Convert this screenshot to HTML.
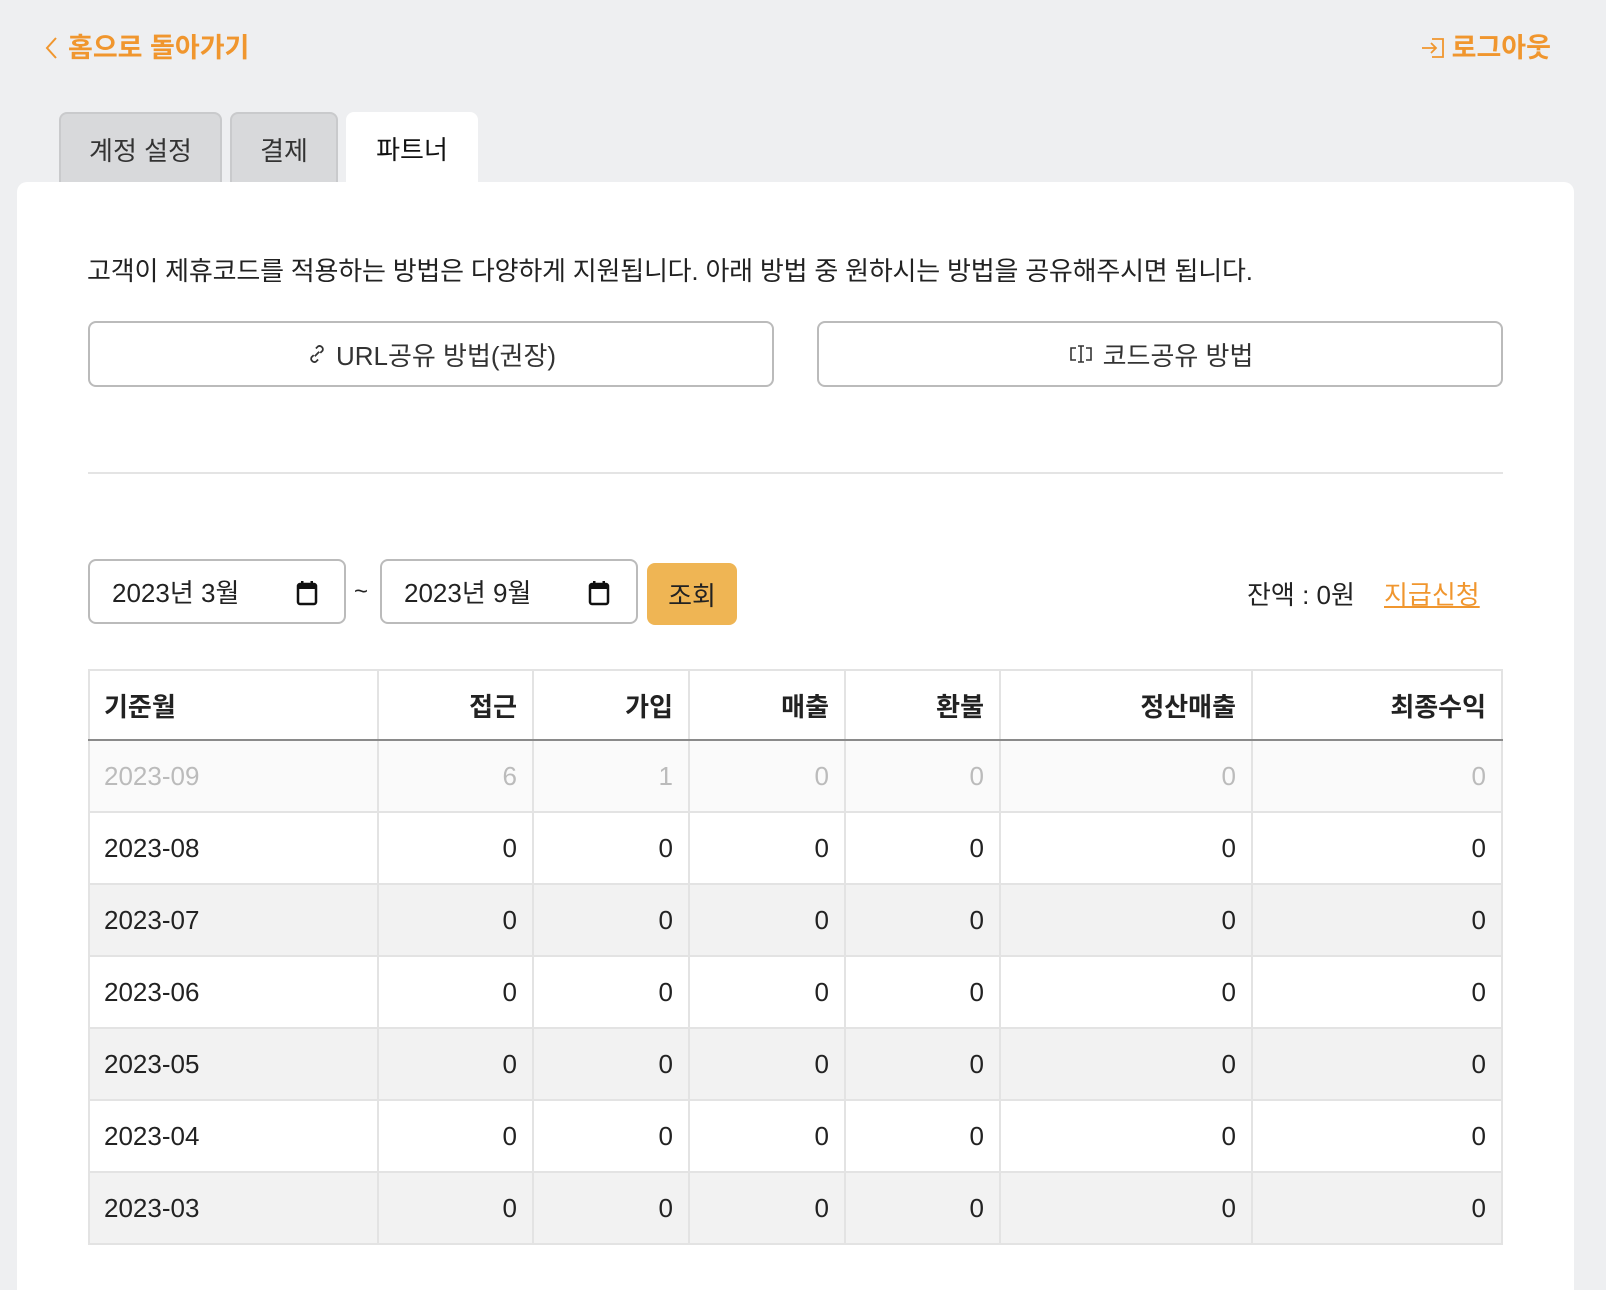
<!DOCTYPE html>
<html><head><meta charset="utf-8"><style>
*{box-sizing:border-box;margin:0;padding:0}
html,body{width:1606px;height:1290px;overflow:hidden}
body{background:#eeeff1;font-family:"Liberation Sans","Noto Sans CJK KR",sans-serif;color:#222;position:relative}
.abs{position:absolute}
.back{left:44px;top:31px;font-size:27px;font-weight:700;color:#f0962e;line-height:34px;display:flex;align-items:center;gap:10px}
.logout{right:55px;top:31px;font-size:27px;font-weight:700;color:#f0962e;line-height:34px;display:flex;align-items:center;gap:6px}
.tab{top:112px;height:72px;border-radius:8px 8px 0 0;font-size:26px;display:flex;align-items:center;justify-content:center;color:#333}
.tab.off{background:#d8d9db;border:2px solid #c9cacc;border-bottom:none}
.tab.on{background:#fff;color:#111}
.card{left:17px;top:182px;width:1557px;height:1150px;background:#fff;border-radius:10px}
.desc{left:87px;top:255px;font-size:26px;color:#222;line-height:32px;letter-spacing:-0.2px}
.btn{top:321px;height:66px;width:686px;border:2px solid #bbb;border-radius:8px;display:flex;align-items:center;justify-content:center;font-size:26px;color:#333;gap:8px}
.hr{left:88px;top:472px;width:1415px;height:2px;background:#e4e4e4}
.date{top:559px;height:65px;width:258px;border:2px solid #bbb;border-radius:8px;font-size:26px;display:flex;align-items:center;padding-left:22px;color:#222}
.date svg{position:absolute;right:26px;top:19px}
.search{left:647px;top:563px;width:90px;height:62px;background:#efb554;border-radius:8px;font-size:26px;display:flex;align-items:center;justify-content:center;color:#222}
table{position:absolute;left:88px;top:669px;width:1415px;border-collapse:collapse;font-size:26px}
td,th{border:2px solid #e3e3e3;height:72px;padding:0 15px 0 14px;text-align:right}
th{font-weight:700;height:70px;border-bottom:2px solid #8a8a8a}
td:first-child,th:first-child{text-align:left}
tr.g td{background:#f2f2f2}
tr.f td{background:#fafafa;color:#bbb}
</style></head><body>
<div class="abs back"><svg width="14" height="24" viewBox="0 0 14 24" fill="none" stroke="#f0962e" stroke-width="2"><path d="M12 2L3 12l9 10"/></svg>홈으로 돌아가기</div>
<div class="abs logout"><svg width="26" height="24" viewBox="0 0 26 24" fill="none" stroke="#f0962e" stroke-width="1.8"><path d="M12 3h11v18H12M2 12h14M11 7l5 5-5 5"/></svg>로그아웃</div>
<div class="abs tab off" style="left:59px;width:163px">계정 설정</div>
<div class="abs tab off" style="left:230px;width:108px">결제</div>
<div class="abs tab on" style="left:346px;width:132px">파트너</div>
<div class="abs card"></div>
<div class="abs desc">고객이 제휴코드를 적용하는 방법은 다양하게 지원됩니다. 아래 방법 중 원하시는 방법을 공유해주시면 됩니다.</div>
<div class="abs btn" style="left:88px"><svg width="22" height="22" viewBox="0 0 20 20" fill="none" stroke="#333" stroke-width="1.6"><path d="M8 12l4-4M9 5l2-2a3 3 0 014 4l-2 2M11 15l-2 2a3 3 0 01-4-4l2-2"/></svg>URL공유 방법(권장)</div>
<div class="abs btn" style="left:817px"><svg width="28" height="24" viewBox="0 0 28 22" fill="none" stroke="#333" stroke-width="1.6"><path d="M9 5H4v12h5M19 5h5v12h-5M11 3h6M11 19h6M14 3v16"/></svg>코드공유 방법</div>
<div class="abs hr"></div>
<div class="abs date" style="left:88px">2023년 3월<svg width="22" height="26" viewBox="0 0 22 26"><rect x="2" y="4" width="18" height="20" rx="2" fill="none" stroke="#111" stroke-width="2.5"/><rect x="2" y="4" width="18" height="5" fill="#111"/><rect x="5" y="1" width="2.5" height="5" fill="#111"/><rect x="14.5" y="1" width="2.5" height="5" fill="#111"/></svg></div>
<div class="abs" style="left:354px;top:578px;font-size:24px">~</div>
<div class="abs date" style="left:380px">2023년 9월<svg width="22" height="26" viewBox="0 0 22 26"><rect x="2" y="4" width="18" height="20" rx="2" fill="none" stroke="#111" stroke-width="2.5"/><rect x="2" y="4" width="18" height="5" fill="#111"/><rect x="5" y="1" width="2.5" height="5" fill="#111"/><rect x="14.5" y="1" width="2.5" height="5" fill="#111"/></svg></div>
<div class="abs search">조회</div>
<div class="abs" style="left:1247px;top:575px;font-size:26px">잔액 : 0원</div>
<div class="abs" style="left:1384px;top:575px;font-size:26px;color:#f0962e;text-decoration:underline">지급신청</div>
<table>
<colgroup><col style="width:289px"><col style="width:155px"><col style="width:156px"><col style="width:156px"><col style="width:155px"><col style="width:252px"><col></colgroup>
<tr><th>기준월</th><th>접근</th><th>가입</th><th>매출</th><th>환불</th><th>정산매출</th><th>최종수익</th></tr>
<tr class="f"><td>2023-09</td><td>6</td><td>1</td><td>0</td><td>0</td><td>0</td><td>0</td></tr>
<tr><td>2023-08</td><td>0</td><td>0</td><td>0</td><td>0</td><td>0</td><td>0</td></tr>
<tr class="g"><td>2023-07</td><td>0</td><td>0</td><td>0</td><td>0</td><td>0</td><td>0</td></tr>
<tr><td>2023-06</td><td>0</td><td>0</td><td>0</td><td>0</td><td>0</td><td>0</td></tr>
<tr class="g"><td>2023-05</td><td>0</td><td>0</td><td>0</td><td>0</td><td>0</td><td>0</td></tr>
<tr><td>2023-04</td><td>0</td><td>0</td><td>0</td><td>0</td><td>0</td><td>0</td></tr>
<tr class="g"><td>2023-03</td><td>0</td><td>0</td><td>0</td><td>0</td><td>0</td><td>0</td></tr>
</table>
</body></html>
